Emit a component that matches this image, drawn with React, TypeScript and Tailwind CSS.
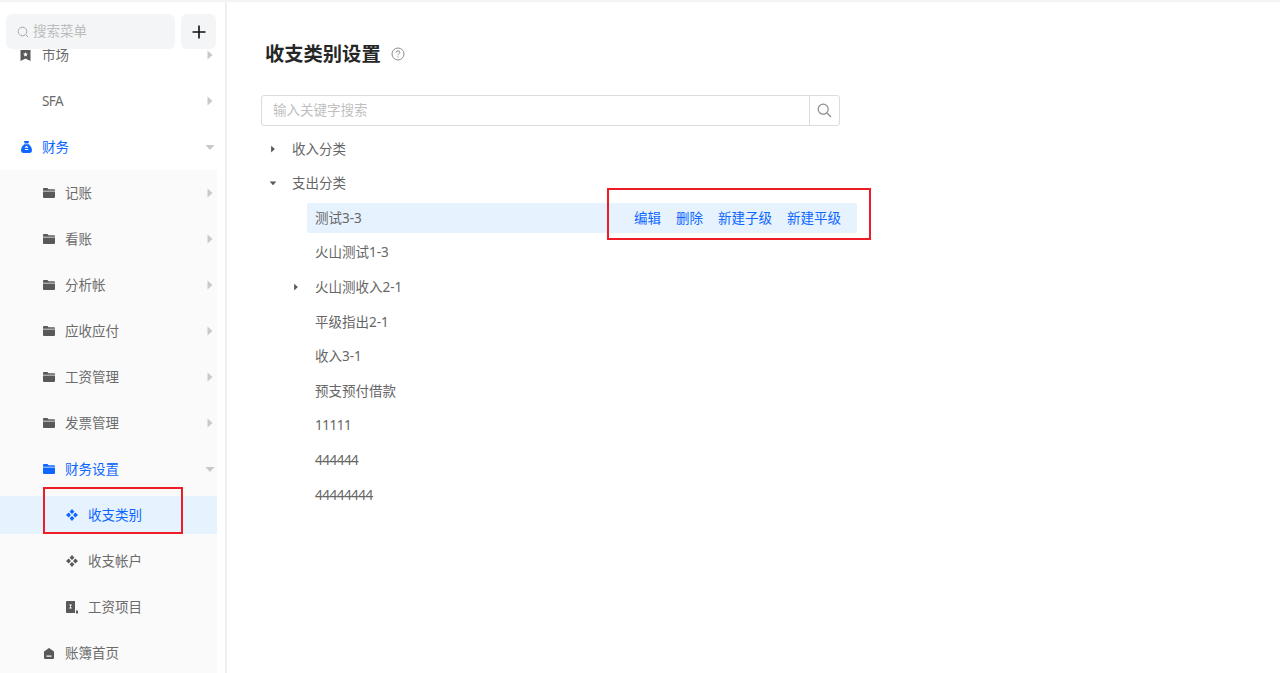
import React from "react";

const FONT = { fontFamily: '"Noto Sans", "Noto Sans CJK SC", sans-serif' };

const Caret = ({ open, className = "" }: { open?: boolean; className?: string }) => (
  <svg width="10" height="10" viewBox="0 0 10 10" className={className}>
    {open ? <path d="M0.5 3 L9.5 3 L5 8 Z" fill="currentColor" /> : <path d="M2.5 0.5 L7.5 5 L2.5 9.5 Z" fill="currentColor" />}
  </svg>
);

const Folder = ({ className = "" }: { className?: string }) => (
  <svg width="12" height="10" viewBox="0 0 12 10" className={className}>
    <path d="M0 1 Q0 0 1 0 H4.5 L5.5 1.3 H11 Q12 1.3 12 2.3 V2.8 H0 Z M0 3.6 H12 V9 Q12 10 11 10 H1 Q0 10 0 9 Z" fill="currentColor" />
  </svg>
);

const Diamonds = ({ className = "" }: { className?: string }) => (
  <svg width="12" height="12" viewBox="0.5 0.5 11 11" className={className}>
    <path d="M6 0.5 L8.2 3 L6 5 L3.8 3 Z M3 3.8 L5 6 L3 8.2 L0.5 6 Z M9 3.8 L11.5 6 L9 8.2 L7 6 Z M6 7 L8.2 9 L6 11.5 L3.8 9 Z" fill="currentColor" />
  </svg>
);

const Bookmark = () => (
  <svg width="11" height="11" viewBox="0 0 11 11" className="text-[#595959] ml-[1px]">
    <path fillRule="evenodd" d="M0.5 0 H10.5 V11 L5.5 8.6 L0.5 11 Z M5.5 2 L4.8 3.6 L3.1 3.8 L4.4 4.9 L4 6.6 L5.5 5.7 L7 6.6 L6.6 4.9 L7.9 3.8 L6.2 3.6 Z" fill="currentColor" />
  </svg>
);

const MoneyBag = () => (
  <svg width="11" height="12" viewBox="0 0 11 12" className="text-[#0d66ff] ml-[2px]">
    <path fillRule="evenodd" d="M3 0 H8 L7.4 2.6 H3.6 Z M3.2 3.2 H7.8 Q11 5.8 11 9 Q11 12 8.5 12 H2.5 Q0 12 0 9 Q0 5.8 3.2 3.2 Z M4.6 5 V5.9 H3.8 V6.8 H7.2 V5.9 H6.4 V5 Z M3.8 8 V8.9 H7.2 V8 Z" fill="currentColor" />
  </svg>
);

const Ledger = () => (
  <svg width="12" height="13" viewBox="0 0 12 13" className="text-[#595959] ml-[1px]">
    <path fillRule="evenodd" d="M0 1 Q0 0 1 0 H9 V12 H1 Q0 12 0 11 Z M3 3.5 L4.5 5.5 L3 7.5 H6 L4.8 5.5 L6 3.5 Z" fill="currentColor" />
    <path d="M10 9.5 H12 V12.5 H10 Z" fill="currentColor" />
  </svg>
);

const Home = () => (
  <svg width="12" height="11" viewBox="0 0 12 11" className="text-[#595959] ml-[1px]">
    <path fillRule="evenodd" d="M6 0 L11 3.5 V10 Q11 11 10 11 H2 Q1 11 1 10 V3.5 Z M3.5 7.5 V8.7 H8.5 V7.5 Z" fill="currentColor" />
  </svg>
);

type NavProps = {
  icon?: React.ReactNode;
  label: string;
  pad: string;
  active?: boolean;
  open?: boolean;
  caret?: boolean;
  sub?: boolean;
  selected?: boolean;
  tight?: boolean;
};

const NavRow = ({ icon, label, pad, active, open, caret = true, sub, selected, tight }: NavProps) => (
  <div
    className={`flex items-center w-[217px] text-[13.5px] ${pad} ${selected ? "bg-[#e6f3fe] h-[38px] my-[4px]" : sub ? "bg-[#fafafa] h-[46px]" : "h-[46px]"} ${
      active ? "text-[#0d66ff]" : "text-[#6b6b6b]"
    }`}
  >
    <span className="w-[23px] flex items-center shrink-0">{icon}</span>
    <span className={`flex-1 whitespace-nowrap ${tight ? "tracking-[-0.6px]" : ""}`}>{label}</span>
    {caret && <Caret open={open} className="text-[#c9c9c9] mr-[2px]" />}
  </div>
);

const TreeRow = ({
  label,
  level = 0,
  caret,
  open,
  selected,
  tight,
}: {
  label: string;
  level?: number;
  caret?: boolean;
  open?: boolean;
  selected?: boolean;
  tight?: boolean;
}) => (
  <div className="flex items-center h-[34.6px] text-[13.5px] text-[#666666]">
    {level === 1 && <span className="w-[23px] shrink-0" />}
    <span className="w-[23px] flex items-center justify-start pl-[7px] shrink-0 text-[#595959]">
      {caret && <Caret open={open} className="scale-75" />}
    </span>
    <div className={`flex items-center h-[30px] w-[550px] rounded-[2px] pl-[8px] ${selected ? "bg-[#e6f3fe]" : ""}`}>
      <span className={`flex-1 whitespace-nowrap ${tight ? "tracking-[-0.5px]" : ""}`}>{label}</span>
      {selected && (
        <span className="flex gap-[15px] pr-[16px] text-[#0d66ff]">
          <span>编辑</span>
          <span>删除</span>
          <span>新建子级</span>
          <span>新建平级</span>
        </span>
      )}
    </div>
  </div>
);

export default function App() {
  return (
    <div style={FONT} className="relative h-[673px] w-full overflow-hidden bg-white border-t-[2px] border-[#f4f4f4] flex">
      <aside className="relative w-[227px] h-full shrink-0 border-r-[2px] border-[#f0f0f0] overflow-hidden pt-[30px]">
        <NavRow pad="pl-[19px]" icon={<Bookmark />} label="市场" />
        <NavRow pad="pl-[19px]" label="SFA" tight />
        <NavRow pad="pl-[19px]" icon={<MoneyBag />} label="财务" active open />
        <NavRow pad="pl-[42px]" sub icon={<Folder className="text-[#595959] ml-[1px]" />} label="记账" />
        <NavRow pad="pl-[42px]" sub icon={<Folder className="text-[#595959] ml-[1px]" />} label="看账" />
        <NavRow pad="pl-[42px]" sub icon={<Folder className="text-[#595959] ml-[1px]" />} label="分析帐" />
        <NavRow pad="pl-[42px]" sub icon={<Folder className="text-[#595959] ml-[1px]" />} label="应收应付" />
        <NavRow pad="pl-[42px]" sub icon={<Folder className="text-[#595959] ml-[1px]" />} label="工资管理" />
        <NavRow pad="pl-[42px]" sub icon={<Folder className="text-[#595959] ml-[1px]" />} label="发票管理" />
        <NavRow pad="pl-[42px]" sub active open icon={<Folder className="text-[#0d66ff] ml-[1px]" />} label="财务设置" />
        <div className="bg-[#fafafa] w-[217px] flow-root">
          <NavRow pad="pl-[65px]" selected active caret={false} icon={<Diamonds className="text-[#0d66ff] ml-[1px]" />} label="收支类别" />
          <NavRow pad="pl-[65px]" sub caret={false} icon={<Diamonds className="text-[#595959] ml-[1px]" />} label="收支帐户" />
          <NavRow pad="pl-[65px]" sub caret={false} icon={<Ledger />} label="工资项目" />
          <NavRow pad="pl-[42px]" sub caret={false} icon={<Home />} label="账簿首页" />
        </div>

        <div className="absolute left-[6px] top-[12px] flex gap-[6px]">
          <div className="flex items-center w-[169px] h-[35px] rounded-[6px] bg-[#f3f5f7] pl-[11px] text-[13.5px] text-[#bdbdbd]">
            <svg width="12" height="12" viewBox="0 0 12 12" fill="none" stroke="#a8a8a8" strokeWidth="1" className="mr-[4px]">
              <circle cx="5.5" cy="5.5" r="4.3" />
              <path d="M8.7 8.7 L11 11" />
            </svg>
            搜索菜单
          </div>
          <div className="flex items-center justify-center w-[35px] h-[35px] rounded-[6px] bg-[#f3f5f7]">
            <svg width="14" height="14" viewBox="0 0 14 14" stroke="#111111" strokeWidth="1.6">
              <path d="M7 0.5 V13.5 M0.5 7 H13.5" />
            </svg>
          </div>
        </div>
      </aside>

      <main className="flex-1 pl-[34px] pt-[36px]">
        <div className="flex items-center h-[32px] pl-[4px]">
          <h1 className="text-[19.3px] font-bold text-[#262626] leading-none">收支类别设置</h1>
          <svg width="14" height="14" viewBox="0 0 14 14" fill="none" stroke="#8c8c8c" strokeWidth="1" className="ml-[10px]">
            <circle cx="7" cy="7" r="6" />
            <path d="M5.2 5.6 Q5.2 3.8 7 3.8 Q8.8 3.8 8.8 5.3 Q8.8 6.3 7.6 6.9 Q7 7.2 7 8.2" />
            <path d="M7 9.4 V10.4" />
          </svg>
        </div>
        <div className="mt-[25px] flex w-[579px] h-[31px] border border-[#dcdcdc] rounded-[3px] items-center">
          <span className="flex-1 pl-[11px] text-[13.5px] text-[#bfbfbf]">输入关键字搜索</span>
          <span className="w-[30px] h-full border-l border-[#dcdcdc] flex items-center justify-center">
            <svg width="15" height="15" viewBox="0 0 15 15" fill="none" stroke="#8c8c8c" strokeWidth="1.2">
              <circle cx="6.2" cy="6.2" r="5" />
              <path d="M10 10 L14 14" />
            </svg>
          </span>
        </div>
        <div className="mt-[5.5px]">
          <TreeRow label="收入分类" caret />
          <TreeRow label="支出分类" caret open />
          <TreeRow label="测试3-3" level={1} selected />
          <TreeRow label="火山测试1-3" level={1} />
          <TreeRow label="火山测收入2-1" level={1} caret />
          <TreeRow label="平级指出2-1" level={1} />
          <TreeRow label="收入3-1" level={1} />
          <TreeRow label="预支预付借款" level={1} />
          <TreeRow label="11111" level={1} tight />
          <TreeRow label="444444" level={1} tight />
          <TreeRow label="44444444" level={1} tight />
        </div>
      </main>

      <div className="absolute left-[43px] top-[485px] w-[140px] h-[47px] border-[2px] border-[#ee1c25]" />
      <div className="absolute left-[607px] top-[186px] w-[264px] h-[52px] border-[2px] border-[#ee1c25]" />
    </div>
  );
}
